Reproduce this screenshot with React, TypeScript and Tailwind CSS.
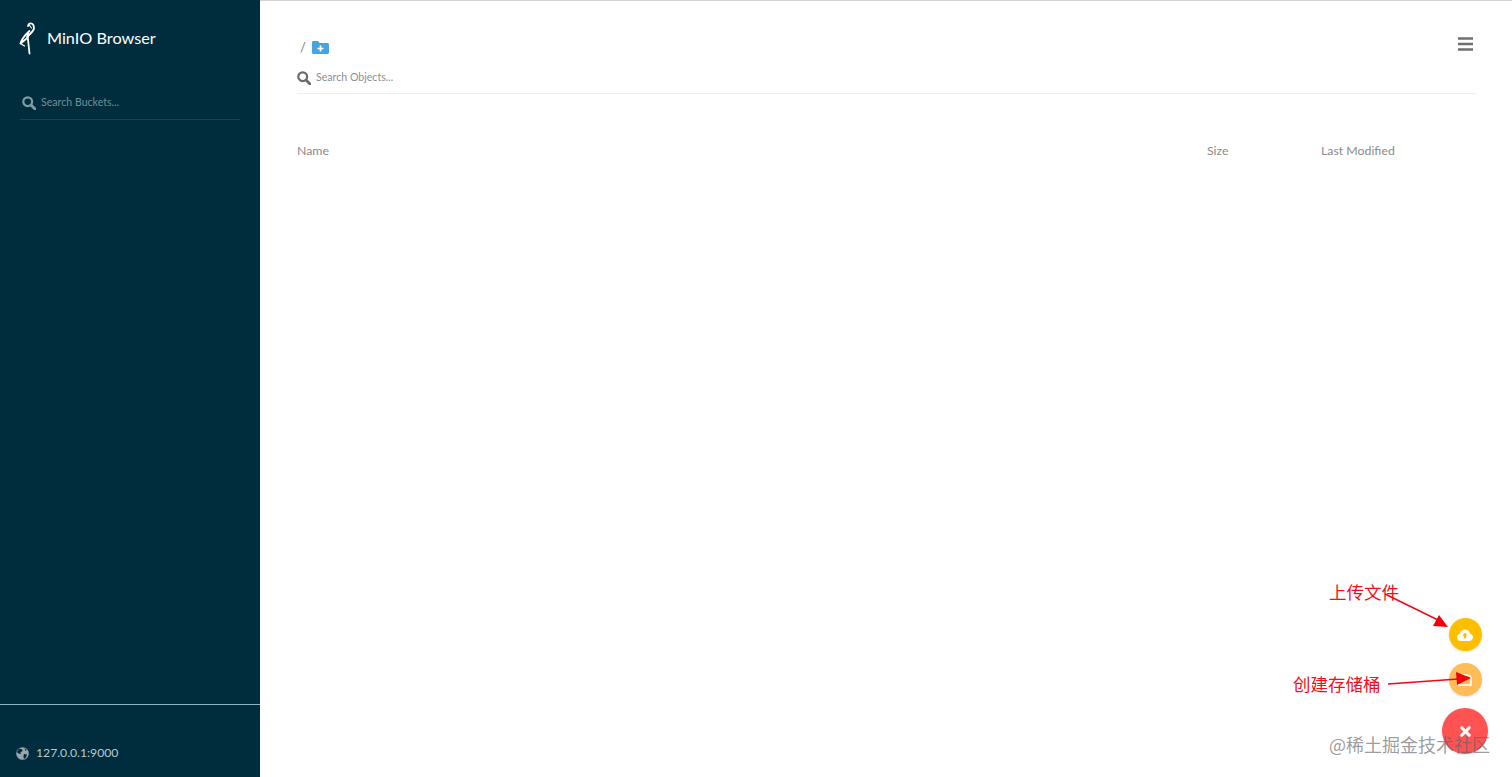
import { X } from 'lucide-react';

function HeronLogo() {
  return (
    <svg width="20" height="34" viewBox="0 0 20 34" fill="none" stroke="#ffffff" strokeWidth="1.8" strokeLinecap="round" strokeLinejoin="round" className="shrink-0">
      <path d="M9 5 C9.5 2 12.5 1.5 14 3.5 C16 6.5 15 9 12.5 11.5 L8 16" />
      <path d="M9.5 3 L12.5 7" strokeWidth="1.1" />
      <path d="M10.5 10 C6.5 13.5 3 17 1.5 22.5 L6.5 18.5 C9 16.5 10 14.5 9 12.5" />
      <path d="M8.5 14 L10.5 32.5" />
      <path d="M1.5 22.5 L5.5 25" strokeWidth="1.2" />
    </svg>
  );
}

function SearchGlyph({ color }: { color: string }) {
  return (
    <svg width="14" height="14" viewBox="0 0 14 14" fill="none" stroke={color} className="shrink-0">
      <circle cx="5.7" cy="5.7" r="4.4" strokeWidth="2.2" />
      <path d="M9 9 L13 13" strokeWidth="2.8" strokeLinecap="round" />
    </svg>
  );
}

function FolderPlus() {
  return (
    <svg width="17" height="13" viewBox="0 0 17 13" className="shrink-0">
      <path d="M0 1.5 C0 .6 .6 0 1.5 0 H6 L7.6 2 H15.5 C16.4 2 17 2.6 17 3.5 V11.5 C17 12.4 16.4 13 15.5 13 H1.5 C.6 13 0 12.4 0 11.5 Z" fill="#46a5e0" />
      <path d="M8.5 4.5 V10.5 M5.5 7.5 H11.5" stroke="#ffffff" strokeWidth="1.7" />
    </svg>
  );
}

function Globe() {
  return (
    <svg width="13" height="13" viewBox="0 0 13 13" className="shrink-0">
      <circle cx="6.5" cy="6.5" r="6.3" fill="#9aa6ab" />
      <path d="M3 1.6 L6 2.2 L6.6 4 L4.6 5.2 L4.8 7 L2.6 6.4 L.8 5 Z M8 7 L11 7.4 L10 10.4 L8 12 L7.4 9.6 Z M8.4 1.2 L11 3 L9.4 3.8 Z" fill="#002d3e" />
    </svg>
  );
}

function Bars() {
  return (
    <svg width="15" height="14" viewBox="0 0 15 14" className="shrink-0">
      <path d="M0 1.5 H15 M0 7 H15 M0 12.5 H15" stroke="#707070" strokeWidth="2.6" />
    </svg>
  );
}

function CloudUpload() {
  return (
    <svg width="16" height="12" viewBox="0 0 16 12">
      <path d="M4 12 C1.8 12 0 10.4 0 8.3 C0 6.5 1.2 5.1 2.9 4.8 C3.5 2.2 5.6 0.5 8 0.5 C10.6 0.5 12.7 2.3 13.1 4.8 C14.8 5.1 16 6.5 16 8.3 C16 10.4 14.3 12 12.2 12 Z" fill="#ffffff" />
      <path d="M8 3.6 L10.6 6.8 H9 V9.6 H7 V6.8 H5.4 Z" fill="#ffbf00" />
    </svg>
  );
}

function Annotations() {
  return (
    <>
      <span className="absolute left-[1329px] top-[581px] text-[17.5px] leading-[22px] text-[#f0101a] whitespace-nowrap font-['Noto_Sans_CJK_SC',sans-serif]">上传文件</span>
      <span className="absolute left-[1293px] top-[673px] text-[17.5px] leading-[22px] text-[#f0101a] whitespace-nowrap font-['Noto_Sans_CJK_SC',sans-serif]">创建存储桶</span>
      <svg width="1512" height="777" className="absolute inset-0 pointer-events-none">
        <path d="M1385 594 L1438 620" stroke="#ee0a14" strokeWidth="1.5" />
        <path d="M1448 627 L1433 626 L1439 615 Z" fill="#f2000e" />
        <path d="M1388 684 L1458 679" stroke="#ee0a14" strokeWidth="1.5" />
        <path d="M1471 678 L1457 685 L1456 672 Z" fill="#f2000e" />
      </svg>
      <span className="absolute left-[1329px] top-[733px] text-[18px] leading-[22px] text-[#5f6367]/65 whitespace-nowrap font-['Noto_Sans_CJK_SC',sans-serif]">@稀土掘金技术社区</span>
    </>
  );
}

export default function App() {
  return (
    <div className="relative flex h-[777px] w-[1512px] overflow-hidden bg-white font-['Lato',sans-serif]">
      {/* Sidebar */}
      <aside className="flex h-full w-[260px] shrink-0 flex-col bg-[#002d3e]">
        <div className="flex items-center gap-[8px] pl-[19px] pt-[21px]">
          <HeronLogo />
          <span className="text-[16.25px] leading-[34px] text-white">MinIO Browser</span>
        </div>
        <div className="mx-[20px] mt-[31px] flex h-[34px] items-center gap-[5px] border-b border-white/10 pl-[2px]">
          <SearchGlyph color="#7f9ba5" />
          <span className="text-[10.6px] text-[#6f8e99]">Search Buckets...</span>
        </div>
        <div className="flex-1" />
        <div className="flex h-[73px] items-center gap-[7px] border-t border-[#8fb5c2] pl-[16px] pt-[24px]">
          <Globe />
          <span className="text-[12.2px] text-[#b9c8cd]">127.0.0.1:9000</span>
        </div>
      </aside>

      {/* Main */}
      <main className="flex h-full flex-1 flex-col border-t border-[#d4d4d4] pl-[37px] pr-[36px]">
        <div className="flex h-[61px] items-start justify-between pt-[36px]">
          <div className="mt-[4px] flex items-center gap-[6px] pl-[3px]">
            <span className="text-[13px] leading-[13px] text-[#777777]">/</span>
            <FolderPlus />
          </div>
          <div className="mr-[3px]">
            <Bars />
          </div>
        </div>
        <div className="flex h-[32px] items-center gap-[5px] border-b border-[#eeeeee]">
          <SearchGlyph color="#6b6b6b" />
          <span className="text-[10.6px] text-[#8e8e8e]">Search Objects...</span>
        </div>
        <div className="mt-[49px] flex text-[12.3px] leading-[16px] text-[#8a8a8a]">
          <span className="flex-1">Name</span>
          <span className="w-[114px]">Size</span>
          <span className="w-[155px]">Last Modified</span>
        </div>
      </main>

      {/* Action buttons */}
      <div className="absolute bottom-[23px] right-[24px] flex w-[46px] flex-col items-center gap-[12px]">
        <button className="flex h-[33px] w-[33px] items-center justify-center rounded-full bg-[#ffbf00] shadow-sm">
          <CloudUpload />
        </button>
        <button className="flex h-[33px] w-[33px] items-center justify-center rounded-full bg-[#ffbc57] shadow-sm">
          <svg width="14" height="12" viewBox="0 0 14 12"><path d="M1 11 V4 C1 2 3 1 7 1 C11 1 13 2 13 4 V11 Z" fill="none" stroke="#ffffff" strokeWidth="1.6" /></svg>
        </button>
        <button className="flex h-[46px] w-[46px] items-center justify-center rounded-full bg-[#ff5252] shadow-sm">
          <X className="h-[15px] w-[15px] text-white" strokeWidth={5} />
        </button>
      </div>

      <Annotations />
    </div>
  );
}
